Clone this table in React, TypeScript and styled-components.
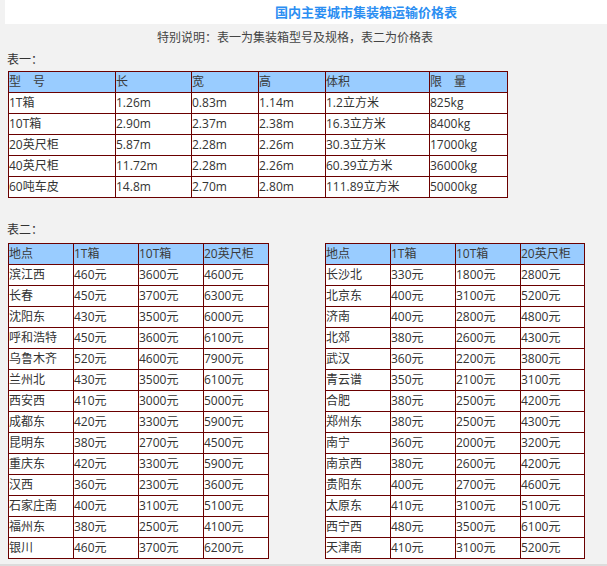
import React from "react";
import styled, { createGlobalStyle } from "styled-components";

const GlobalStyle = createGlobalStyle`
  html, body {
    margin: 0;
    padding: 0;
    background: #f2f2f2;
  }
  body {
    font-family: "Open Sans", "Noto Sans CJK SC", sans-serif;
    font-size: 12px;
    color: #333;
  }
`;

const Page = styled.div`
  width: 607px;
  height: 566px;
  overflow: hidden;
`;

const TitleBar = styled.div`
  margin-left: 5px;
  height: 24px;
  background: #ffffff;
  padding-left: 270px;
`;

const Title = styled.h1`
  margin: 0;
  font-family: "Noto Sans CJK SC", sans-serif;
  font-size: 13px;
  line-height: 24px;
  font-weight: bold;
  color: #2b8ef2;
`;

const Note = styled.p`
  margin: 4px 0 0 0;
  padding-left: 157px;
  line-height: 20px;
  font-size: 12px;
  color: #444;
`;

const Label = styled.div<{ $top: number }>`
  margin-top: ${(p) => p.$top}px;
  padding-left: 7px;
  line-height: 20px;
  font-size: 12px;
  color: #333;
`;

const Table = styled.table<{ $top: number; $width: number }>`
  margin-top: ${(p) => p.$top}px;
  border-collapse: collapse;
  table-layout: fixed;
  width: ${(p) => p.$width}px;
  background: #ffffff;
`;

const HeadCell = styled.th`
  background: #99ccff;
  border: 1px solid #6a0000;
  height: 20px;
  padding: 0;
  text-align: left;
  font-weight: normal;
  font-size: 12px;
  line-height: 20px;
  color: #3a3a3a;
  white-space: nowrap;
`;

const Cell = styled.td`
  border: 1px solid #6a0000;
  height: 20px;
  padding: 0;
  text-align: left;
  font-size: 12px;
  line-height: 20px;
  color: #333;
  white-space: nowrap;
`;

const SpecWrap = styled.div`
  padding-left: 8px;
`;

const PriceRow = styled.div`
  display: flex;
  gap: 56px;
  padding-left: 8px;
  align-items: flex-start;
`;

const Footer = styled.div`
  margin-top: 5px;
  border-top: 2px solid #dcdcdc;
  height: 10px;
  background: #f7f7f7;
`;

const specHead = ["型\u3000号", "长", "宽", "高", "体积", "限\u3000量"];
const specWidths = [107, 76, 67, 67, 104, 78];
const specRows = [
  ["1T箱", "1.26m", "0.83m", "1.14m", "1.2立方米", "825kg"],
  ["10T箱", "2.90m", "2.37m", "2.38m", "16.3立方米", "8400kg"],
  ["20英尺柜", "5.87m", "2.28m", "2.26m", "30.3立方米", "17000kg"],
  ["40英尺柜", "11.72m", "2.28m", "2.26m", "60.39立方米", "36000kg"],
  ["60吨车皮", "14.8m", "2.70m", "2.80m", "111.89立方米", "50000kg"],
];

const priceHead = ["地点", "1T箱", "10T箱", "20英尺柜"];
const leftRows = [
  ["滨江西", "460元", "3600元", "4600元"],
  ["长春", "450元", "3700元", "6300元"],
  ["沈阳东", "430元", "3500元", "6000元"],
  ["呼和浩特", "450元", "3600元", "6100元"],
  ["乌鲁木齐", "520元", "4600元", "7900元"],
  ["兰州北", "430元", "3500元", "6100元"],
  ["西安西", "410元", "3000元", "5000元"],
  ["成都东", "420元", "3300元", "5900元"],
  ["昆明东", "380元", "2700元", "4500元"],
  ["重庆东", "420元", "3300元", "5900元"],
  ["汉西", "360元", "2300元", "3600元"],
  ["石家庄南", "400元", "3100元", "5100元"],
  ["福州东", "380元", "2500元", "4100元"],
  ["银川", "460元", "3700元", "6200元"],
];
const rightRows = [
  ["长沙北", "330元", "1800元", "2800元"],
  ["北京东", "400元", "3100元", "5200元"],
  ["济南", "400元", "2800元", "4800元"],
  ["北郊", "380元", "2600元", "4300元"],
  ["武汉", "360元", "2200元", "3800元"],
  ["青云谱", "350元", "2100元", "3100元"],
  ["合肥", "380元", "2500元", "4200元"],
  ["郑州东", "380元", "2500元", "4300元"],
  ["南宁", "360元", "2000元", "3200元"],
  ["南京西", "380元", "2600元", "4200元"],
  ["贵阳东", "400元", "2700元", "4600元"],
  ["太原东", "410元", "3100元", "5100元"],
  ["西宁西", "480元", "3500元", "6100元"],
  ["天津南", "410元", "3100元", "5200元"],
];

function DataTable({
  head,
  rows,
  widths,
  top,
}: {
  head: string[];
  rows: string[][];
  widths: number[];
  top: number;
}) {
  const total = widths.reduce((a, b) => a + b, 0);
  return (
    <Table $top={top} $width={total}>
      <colgroup>
        {widths.map((w, i) => (
          <col key={i} style={{ width: w }} />
        ))}
      </colgroup>
      <thead>
        <tr>
          {head.map((h, i) => (
            <HeadCell key={i}>{h}</HeadCell>
          ))}
        </tr>
      </thead>
      <tbody>
        {rows.map((r, ri) => (
          <tr key={ri}>
            {r.map((c, ci) => (
              <Cell key={ci}>{c}</Cell>
            ))}
          </tr>
        ))}
      </tbody>
    </Table>
  );
}

export default function App() {
  return (
    <Page>
      <GlobalStyle />
      <TitleBar>
        <Title>国内主要城市集装箱运输价格表</Title>
      </TitleBar>
      <Note>特别说明：表一为集装箱型号及规格，表二为价格表</Note>
      <Label $top={2}>表一：</Label>
      <SpecWrap>
        <DataTable head={specHead} rows={specRows} widths={specWidths} top={1} />
      </SpecWrap>
      <Label $top={22}>表二：</Label>
      <PriceRow>
        <DataTable head={priceHead} rows={leftRows} widths={[65, 65, 65, 65]} top={3} />
        <DataTable head={priceHead} rows={rightRows} widths={[65, 65, 65, 64]} top={3} />
      </PriceRow>
      <Footer />
    </Page>
  );
}
